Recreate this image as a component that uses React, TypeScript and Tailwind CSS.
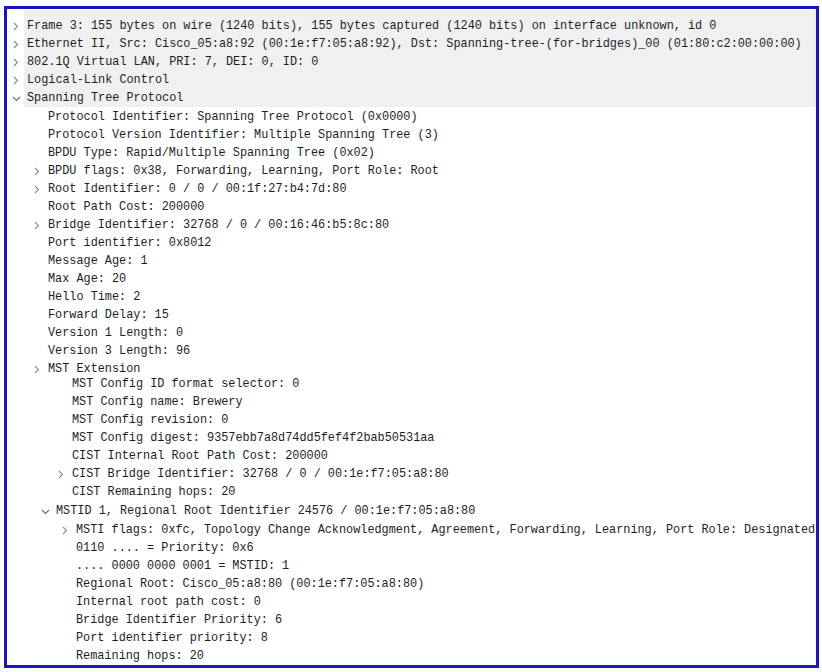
type Row = { lvl: number; chev?: "r" | "d"; text: string; h?: string };

const head: Row[] = [
  { lvl: 0, chev: "r", text: "Frame 3: 155 bytes on wire (1240 bits), 155 bytes captured (1240 bits) on interface unknown, id 0" },
  { lvl: 0, chev: "r", text: "Ethernet II, Src: Cisco_05:a8:92 (00:1e:f7:05:a8:92), Dst: Spanning-tree-(for-bridges)_00 (01:80:c2:00:00:00)" },
  { lvl: 0, chev: "r", text: "802.1Q Virtual LAN, PRI: 7, DEI: 0, ID: 0" },
  { lvl: 0, chev: "r", text: "Logical-Link Control" },
  { lvl: 0, chev: "d", text: "Spanning Tree Protocol" },
];

const body: Row[] = [
  { lvl: 1, text: "Protocol Identifier: Spanning Tree Protocol (0x0000)" },
  { lvl: 1, text: "Protocol Version Identifier: Multiple Spanning Tree (3)" },
  { lvl: 1, text: "BPDU Type: Rapid/Multiple Spanning Tree (0x02)" },
  { lvl: 1, chev: "r", text: "BPDU flags: 0x38, Forwarding, Learning, Port Role: Root" },
  { lvl: 1, chev: "r", text: "Root Identifier: 0 / 0 / 00:1f:27:b4:7d:80" },
  { lvl: 1, text: "Root Path Cost: 200000" },
  { lvl: 1, chev: "r", text: "Bridge Identifier: 32768 / 0 / 00:16:46:b5:8c:80" },
  { lvl: 1, text: "Port identifier: 0x8012" },
  { lvl: 1, text: "Message Age: 1" },
  { lvl: 1, text: "Max Age: 20" },
  { lvl: 1, text: "Hello Time: 2" },
  { lvl: 1, text: "Forward Delay: 15" },
  { lvl: 1, text: "Version 1 Length: 0" },
  { lvl: 1, text: "Version 3 Length: 96" },
  { lvl: 1, chev: "r", text: "MST Extension", h: "h-[15px]" },
  { lvl: 2, text: "MST Config ID format selector: 0" },
  { lvl: 2, text: "MST Config name: Brewery" },
  { lvl: 2, text: "MST Config revision: 0" },
  { lvl: 2, text: "MST Config digest: 9357ebb7a8d74dd5fef4f2bab50531aa" },
  { lvl: 2, text: "CIST Internal Root Path Cost: 200000" },
  { lvl: 2, chev: "r", text: "CIST Bridge Identifier: 32768 / 0 / 00:1e:f7:05:a8:80" },
  { lvl: 2, text: "CIST Remaining hops: 20" },
  { lvl: 3, chev: "d", text: "MSTID 1, Regional Root Identifier 24576 / 00:1e:f7:05:a8:80", h: "h-[20px] items-center" },
  { lvl: 4, chev: "r", text: "MSTI flags: 0xfc, Topology Change Acknowledgment, Agreement, Forwarding, Learning, Port Role: Designated" },
  { lvl: 4, text: "0110 .... = Priority: 0x6" },
  { lvl: 4, text: ".... 0000 0000 0001 = MSTID: 1" },
  { lvl: 4, text: "Regional Root: Cisco_05:a8:80 (00:1e:f7:05:a8:80)" },
  { lvl: 4, text: "Internal root path cost: 0" },
  { lvl: 4, text: "Bridge Identifier Priority: 6" },
  { lvl: 4, text: "Port identifier priority: 8" },
  { lvl: 4, text: "Remaining hops: 20" },
];

const indent: Record<number, string> = {
  0: "pl-[6px]",
  1: "pl-[27px]",
  2: "pl-[51px]",
  3: "pl-[35px]",
  4: "pl-[55px]",
};

function Chevron({ dir }: { dir?: "r" | "d" }) {
  if (!dir) return null;
  if (dir === "d")
    return (
      <svg width="9" height="9" viewBox="0 0 9 9" className="-ml-[1px]">
        <polyline points="1,3 4.5,6.5 8,3" fill="none" stroke="#6b6b6b" strokeWidth="1.1" />
      </svg>
    );
  return (
    <svg width="6" height="9" viewBox="0 0 6 9">
      <polyline points="1,1 4.5,4.5 1,8" fill="none" stroke="#8a8a8a" strokeWidth="1.1" />
    </svg>
  );
}

function Line({ row }: { row: Row }) {
  return (
    <div className={`flex whitespace-nowrap ${row.h ?? "h-[18px] items-center"} ${indent[row.lvl]}`}>
      <div className="w-[14px] h-[18px] shrink-0 flex items-center">
        <Chevron dir={row.chev} />
      </div>
      <span className="leading-[18px]">{row.text}</span>
    </div>
  );
}

export default function App() {
  return (
    <div className="w-[822px] h-[672px] bg-white pt-[6px] pl-[4px]">
      <div className="w-[815px] h-[662px] border-[3px] border-[#1c14c0] overflow-hidden font-['Liberation_Mono',monospace] text-[11.85px] text-[#1e1e1e]">
        <div className="pt-[1px] bg-white">
          <div className="pt-[7px] bg-[linear-gradient(to_right,white_17px,#f0f0f0_17px)]">
            {head.map((r, i) => (
              <Line key={i} row={r} />
            ))}
          </div>
        </div>
        <div className="pt-[1px]">
          {body.map((r, i) => (
            <Line key={i} row={r} />
          ))}
        </div>
      </div>
    </div>
  );
}
